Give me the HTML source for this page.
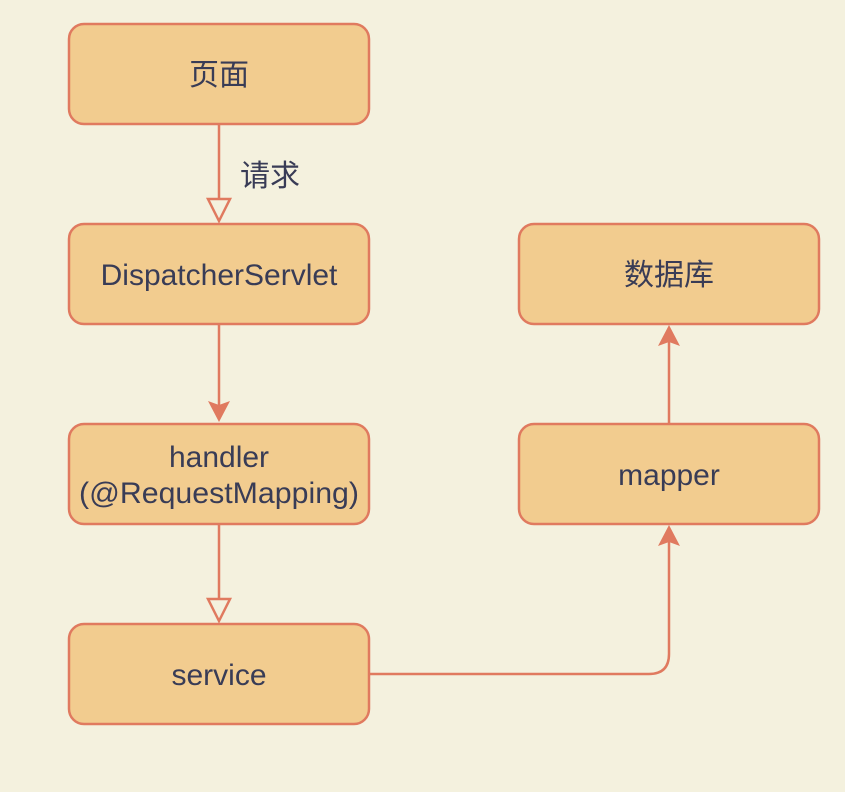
<!DOCTYPE html>
<html><head><meta charset="utf-8"><style>
html,body{margin:0;padding:0;background:#F4F1DE;}
svg{display:block}
text{font-family:"Liberation Sans","Noto Sans CJK SC",sans-serif;font-size:30px;fill:#393C56;text-anchor:middle}
</style></head><body>
<svg width="845" height="792" viewBox="0 0 845 792">
<rect width="845" height="792" fill="#F4F1DE"/>
<g fill="#F2CC8F" stroke="#E07A5F" stroke-width="2.5">
<rect x="69" y="24" width="300" height="100" rx="15"/>
<rect x="69" y="224" width="300" height="100" rx="15"/>
<rect x="69" y="424" width="300" height="100" rx="15"/>
<rect x="69" y="624" width="300" height="100" rx="15"/>
<rect x="519" y="224" width="300" height="100" rx="15"/>
<rect x="519" y="424" width="300" height="100" rx="15"/>
</g>
<g stroke="#E07A5F" stroke-width="2.5" fill="none">
<line x1="219" y1="124" x2="219" y2="199"/>
<polygon points="208,199 230,199 219,221" fill="#F4F1DE"/>
<line x1="219" y1="324" x2="219" y2="405"/>
<line x1="219" y1="524" x2="219" y2="599"/>
<polygon points="208,599 230,599 219,621" fill="#F4F1DE"/>
<path d="M369,674 H649 Q669,674 669,654 V540"/>
<line x1="669" y1="424" x2="669" y2="340"/>
</g>
<g fill="#E07A5F">
<polygon points="208,401 219,422 230,401 219,405"/>
<polygon points="658,546 669,525 680,546 669,542"/>
<polygon points="658,346 669,325 680,346 669,342"/>
</g>
<text x="219" y="85">页面</text>
<text x="270" y="186">请求</text>
<text x="219" y="285">DispatcherServlet</text>
<text x="219" y="467">handler</text>
<text x="219" y="503" textLength="280" lengthAdjust="spacingAndGlyphs">(@RequestMapping)</text>
<text x="219" y="685">service</text>
<text x="669" y="285">数据库</text>
<text x="669" y="485">mapper</text>
</svg>
</body></html>
